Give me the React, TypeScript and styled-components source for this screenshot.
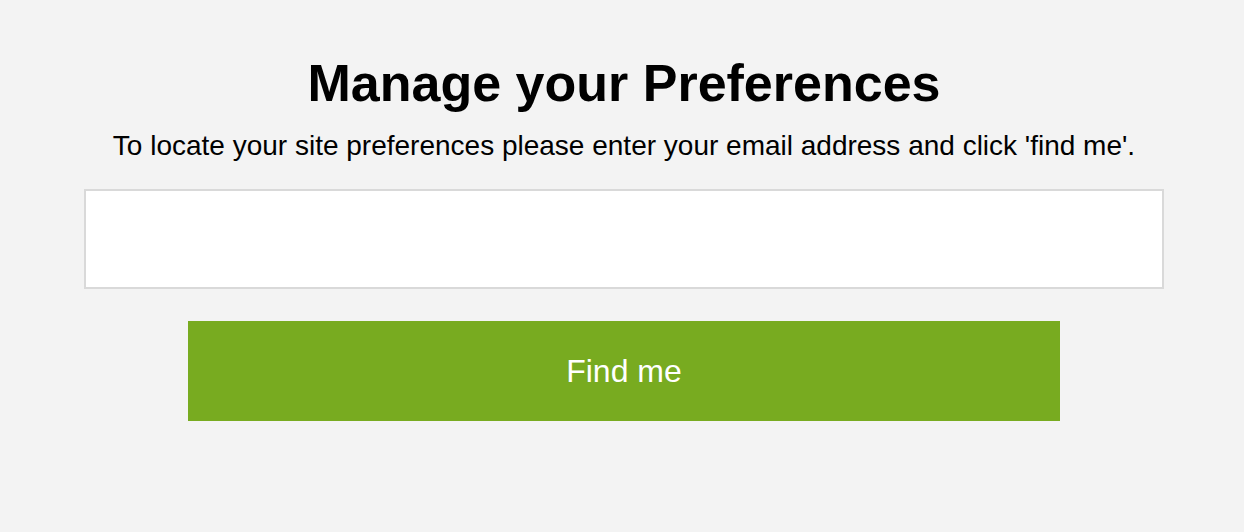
import styled, { createGlobalStyle } from "styled-components";

const GlobalStyle = createGlobalStyle`
  html, body {
    margin: 0;
    padding: 0;
    background: #f3f3f3;
    font-family: "Liberation Sans", Arial, Helvetica, sans-serif;
  }
`;

const Page = styled.main`
  width: 1080px;
  margin: 0 auto;
  padding: 53px 0 0 4px;
  display: flex;
  flex-direction: column;
  align-items: center;
`;

const Title = styled.h1`
  margin: 0;
  font-size: 52px;
  font-weight: 700;
  line-height: 60px;
  color: #000;
`;

const Intro = styled.p`
  margin: 16px 0 0;
  font-size: 28px;
  line-height: 34px;
  color: #000;
  white-space: nowrap;
`;

const EmailInput = styled.input`
  box-sizing: border-box;
  width: 100%;
  height: 100px;
  margin: 26px 0 0;
  border: 2px solid #d9d9d9;
  background: #fff;
  padding: 0 20px;
  font-size: 28px;
  font-family: inherit;
  outline: none;
`;

const FindButton = styled.button`
  width: 872px;
  height: 100px;
  margin-top: 32px;
  padding: 0;
  border: none;
  background: #78ab20;
  color: #fff;
  font-family: inherit;
  font-size: 32px;
  cursor: pointer;
`;

export default function App() {
  return (
    <>
      <GlobalStyle />
      <Page>
        <Title>Manage your Preferences</Title>
        <Intro>To locate your site preferences please enter your email address and click 'find me'.</Intro>
        <EmailInput type="email" aria-label="Email address" />
        <FindButton type="button">Find me</FindButton>
      </Page>
    </>
  );
}
